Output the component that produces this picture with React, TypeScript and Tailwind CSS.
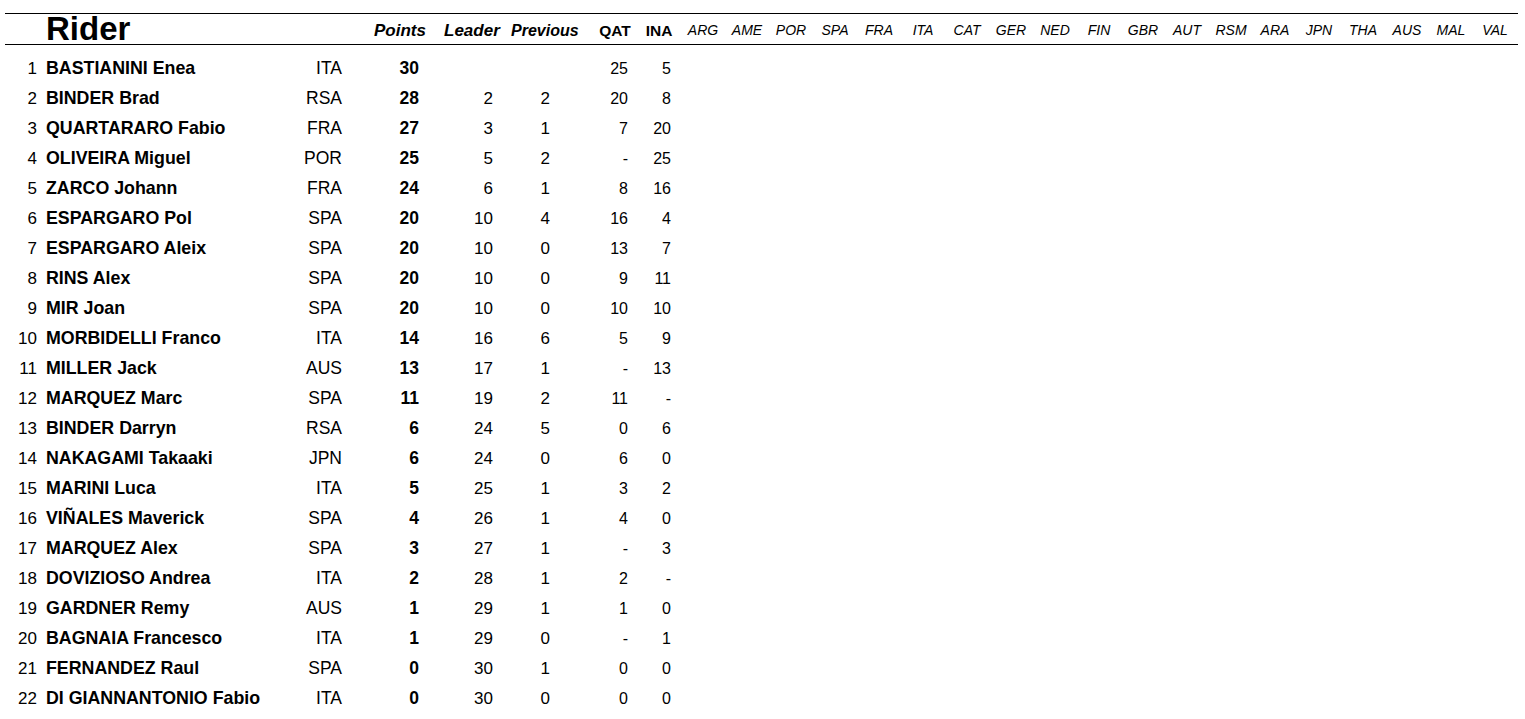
const races = [
  "ARG", "AME", "POR", "SPA", "FRA", "ITA", "CAT", "GER", "NED", "FIN",
  "GBR", "AUT", "RSM", "ARA", "JPN", "THA", "AUS", "MAL", "VAL",
]

type Rider = [number, string, string, string, number, string, string, string, string]

const riders: Rider[] = [
  [1, "BASTIANINI", "Enea", "ITA", 30, "", "", "25", "5"],
  [2, "BINDER", "Brad", "RSA", 28, "2", "2", "20", "8"],
  [3, "QUARTARARO", "Fabio", "FRA", 27, "3", "1", "7", "20"],
  [4, "OLIVEIRA", "Miguel", "POR", 25, "5", "2", "-", "25"],
  [5, "ZARCO", "Johann", "FRA", 24, "6", "1", "8", "16"],
  [6, "ESPARGARO", "Pol", "SPA", 20, "10", "4", "16", "4"],
  [7, "ESPARGARO", "Aleix", "SPA", 20, "10", "0", "13", "7"],
  [8, "RINS", "Alex", "SPA", 20, "10", "0", "9", "11"],
  [9, "MIR", "Joan", "SPA", 20, "10", "0", "10", "10"],
  [10, "MORBIDELLI", "Franco", "ITA", 14, "16", "6", "5", "9"],
  [11, "MILLER", "Jack", "AUS", 13, "17", "1", "-", "13"],
  [12, "MARQUEZ", "Marc", "SPA", 11, "19", "2", "11", "-"],
  [13, "BINDER", "Darryn", "RSA", 6, "24", "5", "0", "6"],
  [14, "NAKAGAMI", "Takaaki", "JPN", 6, "24", "0", "6", "0"],
  [15, "MARINI", "Luca", "ITA", 5, "25", "1", "3", "2"],
  [16, "VIÑALES", "Maverick", "SPA", 4, "26", "1", "4", "0"],
  [17, "MARQUEZ", "Alex", "SPA", 3, "27", "1", "-", "3"],
  [18, "DOVIZIOSO", "Andrea", "ITA", 2, "28", "1", "2", "-"],
  [19, "GARDNER", "Remy", "AUS", 1, "29", "1", "1", "0"],
  [20, "BAGNAIA", "Francesco", "ITA", 1, "29", "0", "-", "1"],
  [21, "FERNANDEZ", "Raul", "SPA", 0, "30", "1", "0", "0"],
  [22, "DI GIANNANTONIO", "Fabio", "ITA", 0, "30", "0", "0", "0"],
]

// shared column template: rank, name, nation, points, leader, previous, QAT, INA, then 19 rounds
const cols =
  "grid grid-cols-[33px_252px_54px_86px_75px_88px_44px_44px_repeat(19,44px)]"

export default function App() {
  return (
    <div className="w-[1525px] h-[719px] bg-white text-black overflow-hidden font-['Liberation_Sans',Arial,sans-serif]">
      <div className="ml-[5px] mt-[13px] w-[1513px]">
        {/* header */}
        <div className="border-y border-black">
          <div className={`${cols} h-[30px] items-start`}>
            <div />
            <div className="pl-[8px] text-[33px] leading-[30px] font-bold">Rider</div>
            <div />
            <div className="pt-[2px] pl-[30px] text-[17px] leading-[30px] font-bold italic">
              Points
            </div>
            <div className="pt-[2px] pl-[14px] text-[17px] leading-[30px] font-bold italic">
              Leader
            </div>
            <div className="pt-[2px] pl-[6px] text-[16px] leading-[30px] font-bold italic whitespace-nowrap">
              Previous
            </div>
            <div className="pt-[2px] text-center text-[15.5px] leading-[30px] font-bold">QAT</div>
            <div className="pt-[2px] text-center text-[15.5px] leading-[30px] font-bold">INA</div>
            {races.map((r) => (
              <div key={r} className="pt-[1px] text-center text-[14px] leading-[30px] italic">
                {r}
              </div>
            ))}
          </div>
        </div>

        {/* standings */}
        <div className="mt-[8px]">
          {riders.map(([pos, last, first, nat, pts, leader, prev, qat, ina]) => (
            <div key={pos} className={`${cols} h-[30px] items-baseline text-[17px] leading-[30px]`}>
              <div className="text-right pr-[1px]">{pos}</div>
              <div className="pl-[8px] text-[17.8px] font-bold whitespace-nowrap">
                {last} {first}
              </div>
              <div className="text-right pr-[2px] text-[17.5px]">{nat}</div>
              <div className="text-right pr-[11px] text-[17.5px] font-bold">{pts}</div>
              <div className="text-right pr-[12px]">{leader}</div>
              <div className="text-right pr-[43px]">{prev}</div>
              <div className="text-right pr-[9px] text-[16px]">{qat}</div>
              <div className="text-right pr-[10px] text-[16px]">{ina}</div>
            </div>
          ))}
        </div>
      </div>
    </div>
  )
}
